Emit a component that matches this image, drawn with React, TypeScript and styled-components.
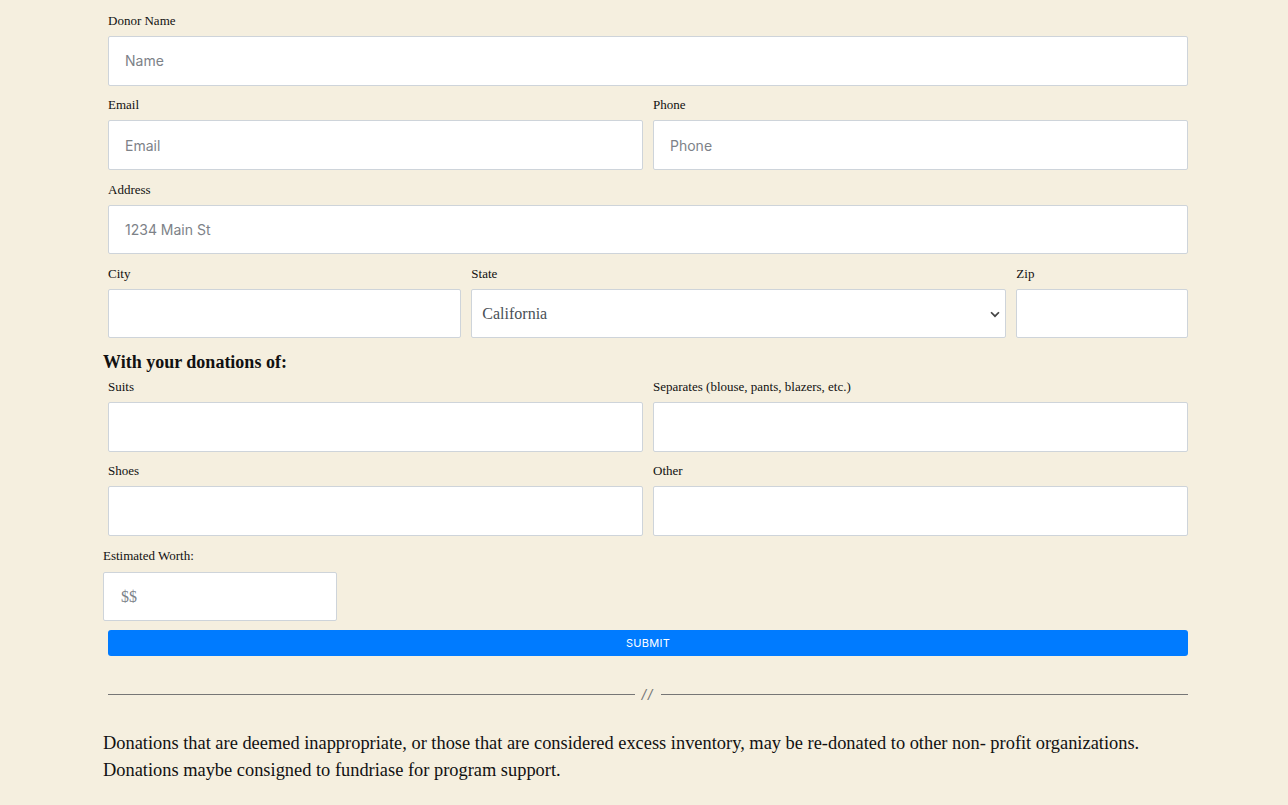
import React from 'react';
import styled, { createGlobalStyle } from 'styled-components';

const GlobalStyle = createGlobalStyle`
  html, body {
    margin: 0;
    padding: 0;
    background: #f5efdf;
  }
  body {
    font-family: "Liberation Serif", "Times New Roman", serif;
    color: #111;
  }
  * {
    box-sizing: border-box;
  }
`;

const Page = styled.div`
  width: 1090px;
  margin-left: 103px;
  padding-top: 11px;
  padding-bottom: 20px;
`;

const Row = styled.div`
  display: flex;
  margin-bottom: 9.8px;
`;

const Col = styled.div<{ $span: number }>`
  flex: 0 0 ${(p) => (p.$span / 12) * 100}%;
  max-width: ${(p) => (p.$span / 12) * 100}%;
  padding: 0 5px;
  position: relative;
`;

const Label = styled.label`
  display: block;
  font-size: 13px;
  line-height: 19px;
  margin-bottom: 6px;
  color: #111;
`;

const Input = styled.input<{ $serif?: boolean }>`
  display: block;
  width: 100%;
  height: 49.5px;
  padding: 0 16px;
  background: #fff;
  border: 1px solid #ced4da;
  border-radius: 2px;
  font-family: ${(p) => (p.$serif ? '"Liberation Serif", serif' : 'Inter, "Liberation Sans", sans-serif')};
  font-size: ${(p) => (p.$serif ? '16px' : '14px')};
  color: #495057;
  outline: none;

  &::placeholder {
    color: #7d8288;
  }
`;

const SelectWrap = styled.div`
  position: relative;
`;

const Select = styled.select`
  display: block;
  width: 100%;
  height: 49.5px;
  padding: 0 30px 0 10px;
  background: #fff;
  border: 1px solid #ced4da;
  border-radius: 2px;
  appearance: none;
  font-family: "Liberation Serif", serif;
  font-size: 16px;
  color: #495057;
  outline: none;
`;

const Chevron = styled.svg`
  position: absolute;
  right: 4px;
  top: 50%;
  transform: translateY(-50%);
  pointer-events: none;
`;

const Heading = styled.h3`
  margin: 0;
  font-size: 18px;
  line-height: 29px;
  font-weight: bold;
`;

const Solo = styled.div`
  margin-bottom: 9px;

  ${Label} {
    margin-bottom: 7px;
  }
`;

const WorthInput = styled(Input)`
  width: 234px;
  padding: 0 17px;
`;

const SubmitButton = styled.button`
  display: block;
  width: 100%;
  height: 26px;
  border: none;
  border-radius: 3px;
  background: #007bff;
  color: #fff;
  font-family: Inter, "Liberation Sans", sans-serif;
  font-size: 11px;
  letter-spacing: 0.3px;
  cursor: pointer;
`;

const Divider = styled.div`
  display: flex;
  align-items: center;
  height: 20px;
  margin: 28px 5px 26px;
`;

const Line = styled.span`
  flex: 1;
  height: 1px;
  background: #767676;
`;

const Slashes = styled.span`
  margin: 0 7px;
  font-family: "Liberation Sans", sans-serif;
  font-style: italic;
  font-size: 15px;
  letter-spacing: 2px;
  color: #777;
`;

const Note = styled.p`
  margin: 0;
  font-size: 18.4px;
  line-height: 27px;
  color: #111;
`;

export default function App() {
  return (
    <>
      <GlobalStyle />
      <Page>
        <Row>
          <Col $span={12}>
            <Label>Donor Name</Label>
            <Input placeholder="Name" />
          </Col>
        </Row>
        <Row>
          <Col $span={6}>
            <Label>Email</Label>
            <Input placeholder="Email" />
          </Col>
          <Col $span={6}>
            <Label>Phone</Label>
            <Input placeholder="Phone" />
          </Col>
        </Row>
        <Row>
          <Col $span={12}>
            <Label>Address</Label>
            <Input placeholder="1234 Main St" />
          </Col>
        </Row>
        <Row>
          <Col $span={4}>
            <Label>City</Label>
            <Input />
          </Col>
          <Col $span={6}>
            <Label>State</Label>
            <SelectWrap>
              <Select defaultValue="California">
                <option>California</option>
              </Select>
              <Chevron width="14" height="14" viewBox="0 0 16 16">
                <path d="M3.5 6l4.5 4.5L12.5 6" fill="none" stroke="#444" strokeWidth="2" />
              </Chevron>
            </SelectWrap>
          </Col>
          <Col $span={2}>
            <Label>Zip</Label>
            <Input />
          </Col>
        </Row>
        <Heading>With your donations of:</Heading>
        <Row>
          <Col $span={6}>
            <Label>Suits</Label>
            <Input />
          </Col>
          <Col $span={6}>
            <Label>Separates (blouse, pants, blazers, etc.)</Label>
            <Input />
          </Col>
        </Row>
        <Row>
          <Col $span={6}>
            <Label>Shoes</Label>
            <Input />
          </Col>
          <Col $span={6}>
            <Label>Other</Label>
            <Input />
          </Col>
        </Row>
        <Solo>
          <Label>Estimated Worth:</Label>
          <WorthInput $serif placeholder="$$" />
        </Solo>
        <Row>
          <Col $span={12}>
            <SubmitButton type="button">SUBMIT</SubmitButton>
          </Col>
        </Row>
        <Divider>
          <Line />
          <Slashes>//</Slashes>
          <Line />
        </Divider>
        <Note>
          Donations that are deemed inappropriate, or those that are considered excess inventory, may be re-donated to other non- profit organizations.
          <br />
          Donations maybe consigned to fundriase for program support.
        </Note>
      </Page>
    </>
  );
}
